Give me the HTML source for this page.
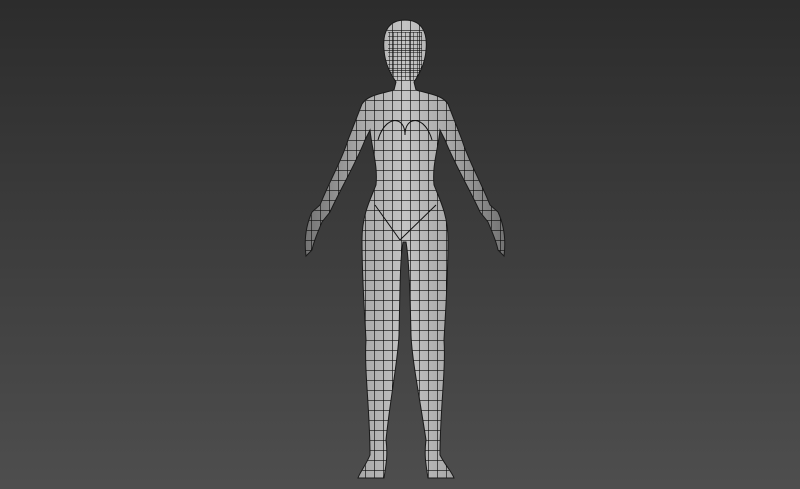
<!DOCTYPE html>
<html><head><style>
html,body{margin:0;padding:0;width:800px;height:489px;overflow:hidden;background:linear-gradient(#2c2c2c,#4e4e4e);}
svg{display:block}
</style></head><body>
<svg width="800" height="489" viewBox="0 0 800 489">
<defs>
<linearGradient id="sh" x1="0" x2="1" y1="0" y2="0">
<stop offset="0" stop-color="#6e6e6e"/><stop offset="0.3" stop-color="#aaaaaa"/>
<stop offset="0.5" stop-color="#c4c4c4"/><stop offset="0.7" stop-color="#aaaaaa"/><stop offset="1" stop-color="#6e6e6e"/>
</linearGradient>
<pattern id="grid" width="9" height="10" patternUnits="userSpaceOnUse" x="401" y="20">
<path d="M0 0H9M0 0V10" stroke="#0c0c0c" stroke-width="1.3" fill="none"/>
</pattern>
<pattern id="fgrid" width="4" height="4" patternUnits="userSpaceOnUse" x="401" y="20">
<path d="M0 0H4M0 0V4" stroke="#0c0c0c" stroke-width="1" fill="none"/>
</pattern>
<clipPath id="body"><path id="bp" d="M405,20 C420,20 428,30 426,50 C425,65 418,76 414,82 L416,90 C430,94 442,95 448,104 L462,140 C468,160 480,180 490,205 L498,212 C504,225 506,240 504,256 L498,250 C496,240 492,232 488,222 L480,212 C470,190 455,165 445,140 L440,130 C438,150 432,165 434,185 C440,200 448,215 448,240 C448,280 445,320 444,340 C446,370 440,410 440,455 C445,465 452,472 454,478 L428,478 C426,465 424,455 426,440 C420,400 412,360 411,335 C410,290 409,260 406,242 L403,242 C400,260 400,290 399,335 C398,360 390,400 386,440 C388,455 386,465 384,478 L358,478 C360,472 366,465 370,455 C370,410 364,370 366,340 C365,320 362,280 362,240 C362,215 370,200 376,185 C378,165 372,150 370,130 L365,140 C355,165 340,190 330,212 L322,222 C318,232 314,240 312,250 L306,256 C304,240 306,225 312,212 L320,205 C330,180 342,160 348,140 L362,104 C368,95 380,94 394,90 L396,82 C392,76 385,65 384,50 C382,30 390,20 405,20 Z"/></clipPath>
</defs>
<g clip-path="url(#body)">
<rect x="300" y="15" width="210" height="470" fill="url(#sh)"/>
<rect x="300" y="15" width="210" height="470" fill="url(#grid)"/>
<rect x="388" y="32" width="34" height="48" fill="url(#fgrid)"/>
<path d="M378,140 C385,115 405,115 405,135 C405,115 425,115 432,140" stroke="#111" fill="none"/>
<path d="M375,205 L400,240 L436,205" stroke="#111" fill="none"/>
</g>
<use href="#bp" fill="none" stroke="#1a1a1a" stroke-width="1"/>
</svg>
</body></html>
